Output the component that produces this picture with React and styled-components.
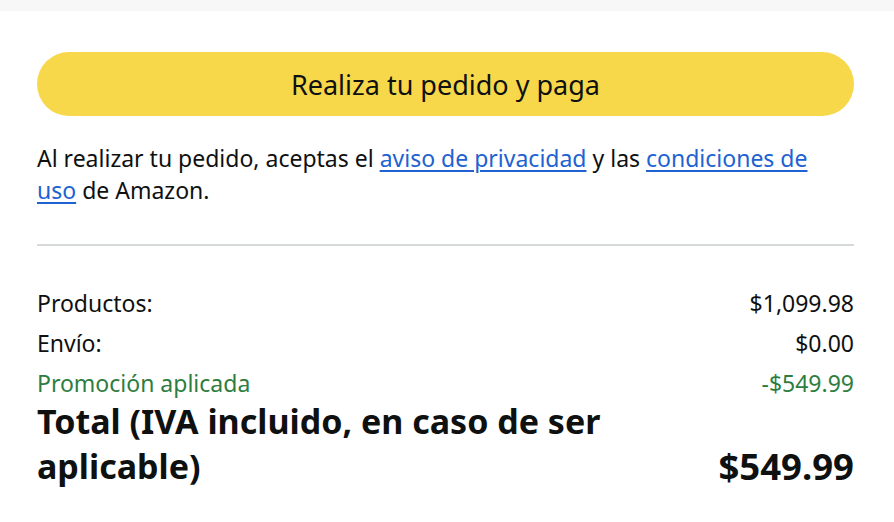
import React from "react";
import styled, { createGlobalStyle } from "styled-components";

const Global = createGlobalStyle`
  html, body { margin: 0; padding: 0; background: #ffffff; }
  body { font-family: "Noto Sans", "Open Sans", Arial, sans-serif; color: #0f1111; }
`;

const TopStrip = styled.div`
  height: 11px;
  background: #f7f7f7;
`;

const Panel = styled.div`
  padding: 41px 40px 0 37px;
`;

const PlaceButton = styled.button`
  display: flex;
  align-items: center;
  justify-content: center;
  width: 100%;
  height: 64px;
  border: none;
  border-radius: 32px;
  background: #f7d84b;
  color: #0f1111;
  font-family: inherit;
  font-size: 27px;
  cursor: pointer;
`;

const Legal = styled.p`
  margin: 26px 0 0;
  max-width: 800px;
  font-size: 23px;
  line-height: 32px;
  color: #0f1111;
`;

const Link = styled.a`
  color: #2162d1;
  text-decoration: underline;
  text-decoration-thickness: 2px;
  text-underline-offset: 3px;
`;

const Divider = styled.hr`
  margin: 38px 0 0;
  border: none;
  height: 2px;
  background: #d5d9d9;
`;

const Summary = styled.div`
  margin-top: 43px;
  display: flex;
  flex-direction: column;
  gap: 12px;
`;

const Row = styled.div`
  display: flex;
  justify-content: space-between;
  align-items: center;
  font-size: 23px;
  line-height: 28px;
  color: ${(p) => (p.$promo ? "#2e7d3f" : "#0f1111")};
`;

const TotalRow = styled.div`
  display: flex;
  justify-content: space-between;
  align-items: flex-end;
  margin-top: -10px;
  font-weight: 700;
  color: #0f1111;
`;

const TotalLabel = styled.div`
  font-size: 34px;
  line-height: 45px;
  max-width: 600px;
`;

const TotalValue = styled.div`
  font-size: 36.5px;
  line-height: 45px;
`;

export default function App() {
  return (
    <>
      <Global />
      <TopStrip />
      <Panel>
        <PlaceButton>Realiza tu pedido y paga</PlaceButton>
        <Legal>
          Al realizar tu pedido, aceptas el <Link href="#">aviso de privacidad</Link> y las{" "}
          <Link href="#">condiciones de uso</Link> de Amazon.
        </Legal>
        <Divider />
        <Summary>
          <Row>
            <span>Productos:</span>
            <span>$1,099.98</span>
          </Row>
          <Row>
            <span>Envío:</span>
            <span>$0.00</span>
          </Row>
          <Row $promo>
            <span>Promoción aplicada</span>
            <span>-$549.99</span>
          </Row>
          <TotalRow>
            <TotalLabel>Total (IVA incluido, en caso de ser aplicable)</TotalLabel>
            <TotalValue>$549.99</TotalValue>
          </TotalRow>
        </Summary>
      </Panel>
    </>
  );
}
